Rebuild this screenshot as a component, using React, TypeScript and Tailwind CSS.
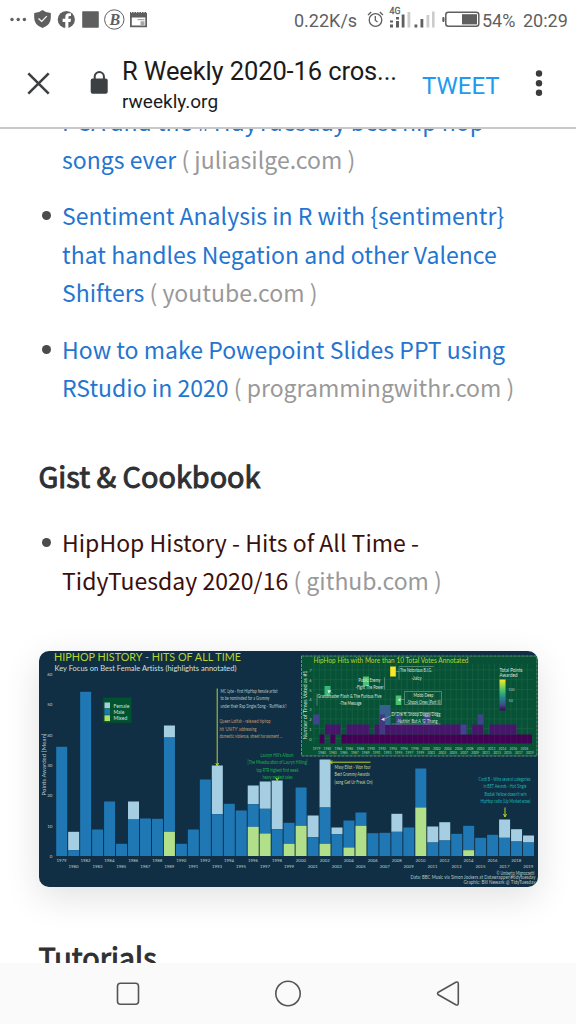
import type { ReactNode } from "react";

const SANS = "font-['Noto_Sans_CJK_SC','Noto_Sans',sans-serif]";

// [year, top of female, top of male, top of mixed]; a value equal to the next one means no segment
const BASE = 856.5;
const BARS: [number, number, number, number][] = [
  [1979, 747.3, 747.3, BASE], [1980, 832.3, 850.7, BASE], [1982, 692.3, 692.3, BASE], [1983, 830, 830, BASE],
  [1984, 802, 802, BASE], [1985, 844.3, 844.3, BASE], [1986, 802, 820, BASE], [1987, 819, 819, BASE],
  [1988, 819.3, 819.3, BASE], [1989, 726, 738, 832.3], [1990, 844.3, 844.3, BASE], [1991, 830, 830, BASE],
  [1992, 780, 780, BASE], [1993, 766, 814.7, BASE], [1994, 804.3, 804.3, BASE], [1995, 811, 811, BASE],
  [1996, 786, 804.7, 827.3], [1997, 782, 809.3, 834], [1998, 781, 829.7, BASE], [1999, 823.3, 823.3, 844.3],
  [2000, 788, 788, 826.3], [2001, 816, 837.7, BASE], [2002, 760, 808, 844.3], [2003, 828, 834.7, BASE],
  [2004, 821, 821, 848], [2005, 813, 813, 826.3], [2006, 833.7, 833.7, BASE], [2007, 833.3, 833.3, BASE],
  [2008, 814.3, 832.3, BASE], [2009, 828, 828, BASE], [2010, 769, 769, 808], [2011, 827, 843, BASE],
  [2012, 822.7, 841, BASE], [2013, 834.3, 834.3, BASE], [2014, 826.3, 826.3, 850.7], [2015, 838.3, 838.3, BASE],
  [2016, 835.3, 835.3, BASE], [2017, 820, 838.3, BASE], [2018, 829.7, 842, BASE], [2019, 836, 843, BASE],
];

function Label({ x, y, w, s, fill = "#b9c9c4", children }: { x: number; y: number; w: number; s: number; fill?: string; children: string }) {
  return (
    <text x={x} y={y} fontSize={s} fill={fill} textLength={w} lengthAdjust="spacingAndGlyphs">
      {children}
    </text>
  );
}

function Chart() {
  return (
    <svg viewBox="38.5 651.5 499 236" className="block h-[236px] w-[499px] rounded-[10px] font-['Lato','Open_Sans',sans-serif] shadow-[0_10px_36px_rgba(0,0,0,0.12)]" preserveAspectRatio="none">
      <defs>
        <linearGradient id="scale" x1="0" y1="0" x2="0" y2="1">
          <stop offset="0" stopColor="#fde725" />
          <stop offset="0.3" stopColor="#5ec962" />
          <stop offset="0.55" stopColor="#21918c" />
          <stop offset="0.8" stopColor="#3b528b" />
          <stop offset="1" stopColor="#440154" />
        </linearGradient>
      </defs>
      <rect x="38" y="651" width="500" height="238" fill="#102e44" />
      <Label x={53.5} y={661} w={187} s={11.5} fill="#b9d629">HIPHOP HISTORY - HITS OF ALL TIME</Label>
      <Label x={54} y={671.3} w={182} s={8} fill="#d5e0df">Key Focus on Best Female Artists (highlights annotated)</Label>
      <text transform="translate(45.5 796) rotate(-90)" fontSize="6" fill="#b9c9c4" textLength="62">Points Awarded [Mean]</text>
      {[0, 10, 20, 30, 40, 50, 60].map((v) => (
        <text key={v} x="52" y={858.5 - v * 3.035} fontSize="4.5" fill="#c2d0cf" textAnchor="end">{v}</text>
      ))}
      {BARS.map(([year, f, m, g], i) => {
        const x = 55.7 + i * 11.97;
        return (
          <g key={year}>
            {f < m && <rect x={x} y={f} width="11" height={m - f} fill="#a6cee3" />}
            <rect x={x} y={m} width="11" height={g - m} fill="#1f78b4" />
            {g < BASE && <rect x={x} y={g} width="11" height={BASE - g} fill="#b2df8a" />}
            <text x={x + 5.3} y={i % 2 ? 868.5 : 862.7} fontSize="4.3" fill="#c2d0cf" textAnchor="middle">{year}</text>
          </g>
        );
      })}

      <rect x="102.5" y="698" width="28.5" height="25.5" fill="#00532f" stroke="#123a31" />
      {[["Female", "#a6cee3"], ["Male", "#1f78b4"], ["Mixed", "#b2df6a"]].map(([t, c], i) => (
        <g key={t}>
          <rect x="104" y={703 + i * 6.4} width="5.5" height="5.8" fill={c} />
          <text x="113" y={708 + i * 6.4} fontSize="5" fill="#d5e0df">{t}</text>
        </g>
      ))}

      <path d="M216.7 689V766M215.3 763.5L216.7 766.5L218.1 763.5" stroke="#b9d629" fill="none" />
      <Label x={220} y={693} w={57} s={5}>MC Lyte - first HipHop female artist</Label>
      <Label x={220} y={700.5} w={49} s={5}>to be nominated for a Grammy</Label>
      <Label x={220} y={708} w={66} s={5}>under their Rap Single/Song - 'RuffNeck'!</Label>
      <Label x={219} y={723.5} w={51} s={5} fill="#c69f6c">Queen Latifah - released hiphop</Label>
      <Label x={219} y={731} w={37} s={5} fill="#c69f6c">hit 'UNITY' addressing</Label>
      <Label x={219} y={738.5} w={63} s={5} fill="#c69f6c">domestic violence, street harassment ...</Label>
      <Label x={260} y={757} w={33} s={5} fill="#16b94c">Lauryn Hill's Album</Label>
      <Label x={247} y={764.5} w={60} s={5} fill="#16b94c">[The Miseducation of Lauryn Hilling]</Label>
      <Label x={256} y={772} w={42} s={5} fill="#16b94c">top RTR highest first week</Label>
      <Label x={262} y={779.5} w={30} s={5} fill="#16b94c">heavy modest sales</Label>
      <path d="M275.3 778L276.7 781L278.1 778M329.5 762.7H370M332 761.2L329 762.7L332 764.2" stroke="#b9d629" fill="none" />
      <Label x={334} y={769} w={36} s={5} fill="#c8d99e">Missy Elliot - Won four</Label>
      <Label x={334} y={776.5} w={35} s={5} fill="#c8d99e">Best Grammy Awards</Label>
      <Label x={334} y={784} w={38} s={5} fill="#c8d99e">(song Get Ur Freak On)</Label>
      <Label x={478} y={781} w={52} s={5} fill="#18b8b5">Cardi B - Wins several categories</Label>
      <Label x={483} y={788.5} w={43} s={5} fill="#18b8b5">in BET Awards - Hot Single</Label>
      <Label x={484} y={796} w={42} s={5} fill="#18b8b5">Bodak Yellow doesn't win</Label>
      <Label x={480} y={803.5} w={50} s={5} fill="#18b8b5">HipHop radio (Up Market wow)</Label>
      <path d="M504.5 808V817M503 814.5L504.5 817.5L506 814.5" stroke="#b9d629" fill="none" />
      <Label x={496} y={875} w={38} s={5}>© Umberto Mignozzetti</Label>
      <Label x={410} y={879.7} w={125} s={5.2}>Data: BBC Music via Simon Jockers at Datawrapper|#tidytuesday</Label>
      <Label x={463} y={884.7} w={72} s={5.2}>Graphic: Bill Newark @ TidyTuesday</Label>

      <rect x="301" y="656.5" width="235.5" height="100" fill="#075236" stroke="#72977f" strokeWidth="0.9" strokeDasharray="3 1" />
      <path d={Array.from({ length: 40 }, (_, i) => `M${313.5 + i * 5.47} 664V744`).join("")} stroke="#23694a" strokeWidth="0.5" />
      <path d={Array.from({ length: 8 }, (_, i) => `M312 ${739 - i * 9.8}H533`).join("")} stroke="#23694a" strokeWidth="0.5" />
      <Label x={313} y={663} w={155} s={6.8} fill="#b9d629">HipHop Hits with More than 10 Total Votes Annotated</Label>
      <text transform="translate(306.5 740) rotate(-90)" fontSize="5.5" fill="#d5e0df" textLength="69">Number of Times Voted as #1</text>
      {[0, 1, 2, 3, 4, 5, 6, 7].map((v) => (
        <text key={v} x="311" y={741 - v * 9.8} fontSize="4" fill="#b9c9c4" textAnchor="end">{v}</text>
      ))}
      <path d="M318.8 735H324V744H318.8zM329.7 735H335V744H329.7zM340.8 735H531.5V744H340.8z" fill="#440154" />
      <path d="M324.5 725H340V735H324.5zM346 725H369V735H346zM374 725H466V735H374zM471.5 725H483V735H471.5zM489 725H516V735H489z" fill="#47166a" />
      <path d="M312.5 715H319V725H312.5zM477 715H483V725H477zM395.5 716H401V725H395.5zM423 715H430V725H423zM460 725H466V735H460z" fill="#40448b" />
      <rect x="379" y="705.5" width="11" height="20" fill="#34618d" />
      <rect x="379" y="715" width="5.5" height="20" fill="#453781" />
      <rect x="324" y="686.5" width="6" height="9.5" fill="#35b779" />
      <rect x="362.5" y="677" width="6" height="9.5" fill="#4ac16d" />
      <rect x="389.7" y="667" width="5.6" height="10" fill="#fde725" />
      <rect x="395.2" y="696" width="5.6" height="9.5" fill="#4ac16d" />
      <path d={Array.from({ length: 39 }, (_, i) => `M${318.9 + i * 5.47} 725V744`).join("")} stroke="#78539a" strokeOpacity="0.3" strokeWidth="0.5" />
      <g fill="none" stroke="#9bb9a7" strokeWidth="0.5">
        <path d="M316.5 694V706M384 678V690M398.5 668V680M398.5 667H433M395 672H399M404 692H441V705H404zM400 700H404M391 713H438M391 724.5H440" />
        <path d="M383 720L391 716M328 691L332 694" />
      </g>
      <path d="M380.5 720L384 718V721.5zM327 690.5L331 691L328 694zM397 700.5L400 698.5V702z" fill="#d7e5df" />
      <Label x={399.5} y={672} w={32} s={4.8} fill="#dce6dd">The Notorious B.I.G.</Label>
      <Label x={411} y={680} w={10} s={4.8} fill="#dce6dd">-Juicy</Label>
      <Label x={358} y={682} w={22} s={4.8} fill="#dce6dd">Public Enemy</Label>
      <Label x={355} y={689.5} w={28} s={4.8} fill="#dce6dd">-Fight The Power</Label>
      <Label x={317} y={698} w={64} s={4.8} fill="#dce6dd">Grandmaster Flash &amp; The Furious Five</Label>
      <Label x={339} y={705.5} w={22} s={4.8} fill="#dce6dd">-The Message</Label>
      <Label x={413} y={697} w={20} s={4.8} fill="#dce6dd">Mobb Deep</Label>
      <Label x={406} y={704.5} w={34} s={4.8} fill="#dce6dd">-Shook Ones (Part II)</Label>
      <Label x={391} y={716.5} w={49} s={4.8} fill="#dce6dd">Dr Dre ft. Snoop Doggy Dogg</Label>
      <Label x={396} y={723.8} w={41} s={4.8} fill="#dce6dd">-Nuthin' But A 'G' Thang</Label>
      <Label x={499} y={672} w={23} s={4.8} fill="#dce6dd">Total Points</Label>
      <Label x={499} y={677} w={18} s={4.8} fill="#dce6dd">Awarded</Label>
      <rect x="499" y="680" width="6" height="31" fill="url(#scale)" />
      <Label x={508} y={691} w={6} s={4}>100</Label>
      <Label x={508} y={702.5} w={4.5} s={4}>50</Label>
      {BARS.map(([year], i) => (
        <text key={year} x={316 + i * 5.47} y={i % 2 ? 754.2 : 750} fontSize="3.3" fill="#b9c9c4" textAnchor="middle">{year}</text>
      ))}
    </svg>
  );
}

function Line({ children }: { children: ReactNode }) {
  return <div className="h-[38.4px] whitespace-nowrap">{children}</div>;
}

function Item({ children }: { children: ReactNode }) {
  return (
    <li className="flex">
      <span className="mt-[15px] mr-[11.5px] ml-[3px] size-[9px] shrink-0 rounded-full bg-[#4b4b4d]" />
      <div>{children}</div>
    </li>
  );
}

const Src = ({ children }: { children: string }) => <span className="text-[#999]">{children}</span>;

function Heading({ children, className }: { children: ReactNode; className: string }) {
  return (
    <h2 className={`h-[38px] text-[28.8px] leading-[38px] font-normal whitespace-nowrap text-[#2f3033] [-webkit-text-stroke:1px_#2f3033] ${className}`}>
      {children}
    </h2>
  );
}

function StatusBar() {
  return (
    <div className="flex h-10 shrink-0 items-center text-[#5f5f5f]">
      <svg className="h-10 w-[288px]" viewBox="0 0 288 40" fill="#5f5f5f">
        <circle cx="12" cy="19.5" r="1.7" /><circle cx="18.2" cy="19.5" r="1.7" /><circle cx="24.4" cy="19.5" r="1.7" />
        <path d="M42.5 10Q46 13 50.8 13V18Q50.8 25 42.5 28Q34.2 25 34.2 18V13Q39 13 42.5 10z" />
        <path d="M38.5 18.5L41.7 21.5L46.8 16.2" fill="none" stroke="#fff" strokeWidth="1.2" />
        <circle cx="66.3" cy="19.5" r="8.6" />
        <path d="M65.3 28.3V22H62.6V18.8H65.3V16.8Q65.3 13.3 68.8 13.3H71V16.1H69.7Q68.4 16.1 68.4 17.4V18.8H71L70.5 22H68.4V28.3z" fill="#fff" />
        <rect x="82.2" y="11.3" width="16.6" height="16.5" rx="0.7" />
        <circle cx="114.3" cy="19.5" r="9.7" fill="none" stroke="#5f5f5f" strokeWidth="1" />
        <text x="109.5" y="25" fontSize="16" fontStyle="italic" fontWeight="700" className="font-['Liberation_Serif',serif]">B</text>
        <path d="M130 12H147V27.2H130z M131.8 17.5V25.6H145.3V17.5z" fillRule="evenodd" />
        <path d="M137.5 19H144.5V20.2H137.5zM140.5 21.2H144.5V25H140.5z" opacity=".55" />
        <path d="M131 12.3H147" stroke="#fff" strokeWidth="1" strokeDasharray="1 1.5" />
      </svg>
      <span className="ml-[6px] w-[63px] text-[18px] whitespace-nowrap">0.22K/s</span>
      <svg className="ml-[9px] h-10 w-[116px]" viewBox="366 0 116 40">
        <g fill="none" stroke="#5f5f5f" strokeWidth="1.3">
          <circle cx="375.5" cy="20" r="6.3" />
          <path d="M375.3 16V20.3L377.5 22M368 15L371.2 12M379.8 12L383 15" />
        </g>
        <text x="389.5" y="14.3" fontSize="8.8" fill="#5f5f5f" stroke="#5f5f5f" strokeWidth="0.3" textLength="11">4G</text>
        <path d="M390 24.5H393V27.5H390zM390 20.5H393V22.5H390zM396 21H399V27.5H396zM396 17H399V19.5H396zM401.7 14.5H404.5V27.5H401.7zM414.5 24.5H417.3V27.5H414.5zM420.5 19H423.3V27.5H420.5z" fill="#5f5f5f" />
        <path d="M407.5 12H410.3V27.5H407.5zM426.5 15H429.3V27.5H426.5zM432 11.5H434.6V27.5H432z" fill="#ccc" />
        <rect x="445.8" y="12.3" width="33" height="14" rx="2.5" fill="none" stroke="#5f5f5f" strokeWidth="1.5" />
        <rect x="462" y="14.2" width="15" height="10.2" fill="#5f5f5f" />
        <rect x="442.3" y="17" width="2.2" height="5" rx="1" fill="#5f5f5f" />
      </svg>
      <span className="w-[41px] text-[18px] whitespace-nowrap">54%</span>
      <span className="text-[18px] whitespace-nowrap">20:29</span>
    </div>
  );
}

export default function App() {
  return (
    <div className="flex h-[1024px] w-[576px] flex-col overflow-hidden bg-white font-['Roboto',sans-serif]">
      <StatusBar />
      <header className="flex h-[89px] shrink-0 border-b-2 border-[#c9c9c9] bg-white">
        <svg className="h-[87px] w-[122px] shrink-0" viewBox="0 40 122 87">
          <path d="M28.3 73.3L48.7 93.7M48.7 73.3L28.3 93.7" stroke="#3c4043" strokeWidth="2.6" />
          <rect x="90.7" y="78.5" width="17" height="15.3" rx="2" fill="#3c4043" />
          <path d="M94.7 79V76.6A4.6 4.6 0 0 1 103.9 76.6V79" fill="none" stroke="#3c4043" strokeWidth="2" />
        </svg>
        <div className="w-[300px] pt-[15px] text-[#1b1b1b]">
          <div className="h-[33px] text-[25.5px] leading-[33px] tracking-[-0.12px] whitespace-nowrap">R Weekly 2020-16 cros...</div>
          <div className="mt-px h-[26px] text-[19px] leading-[26px] whitespace-nowrap">rweekly.org</div>
        </div>
        <span className="w-[104px] pt-[29px] text-[24px] leading-[34px] text-[#1d9bf0]">TWEET</span>
        <svg className="h-[87px] w-[24px]" viewBox="526 40 24 87" fill="#3b3b3d">
          <circle cx="539" cy="73.5" r="3.2" /><circle cx="539" cy="83.2" r="3.2" /><circle cx="539" cy="92.8" r="3.2" />
        </svg>
      </header>
      <main className={`min-h-0 flex-1 overflow-hidden pl-[38.5px] text-[23px] leading-[38.4px] tracking-[0.02px] text-[#2475d0] ${SANS}`}>
        <ul className="-mt-[27.2px] flex flex-col gap-[17.9px]">
          <Item>
            <Line>PCA and the #TidyTuesday best hip hop</Line>
            <Line>songs ever <Src>( juliasilge.com )</Src></Line>
          </Item>
          <Item>
            <Line>Sentiment Analysis in R with {"{sentimentr}"}</Line>
            <Line>that handles Negation and other Valence</Line>
            <Line>Shifters <Src>( youtube.com )</Src></Line>
          </Item>
          <Item>
            <Line>How to make Powepoint Slides PPT using</Line>
            <Line>RStudio in 2020 <Src>( programmingwithr.com )</Src></Line>
          </Item>
        </ul>
        <Heading className="mt-[50.4px]">Gist &amp; Cookbook</Heading>
        <ul className="mt-[28px] text-[#3c0f0c]">
          <Item>
            <Line>HipHop History - Hits of All Time -</Line>
            <Line>TidyTuesday 2020/16 <Src>( github.com )</Src></Line>
          </Item>
        </ul>
        <div className="mt-[51.4px]"><Chart /></div>
        <Heading className="mt-[51px]">Tutorials</Heading>
      </main>
      <nav className="z-10 h-[61px] shrink-0 bg-[#fafafa]">
        <svg className="h-[61px] w-[576px]" viewBox="0 963 576 61" fill="none" stroke="#555" strokeWidth="1.6">
          <rect x="117.5" y="983.3" width="21" height="21" rx="3" />
          <circle cx="288" cy="993.5" r="12.2" />
          <path d="M438.3 992.2L455.8 982.2Q458.3 981.3 458.3 984V1003Q458.3 1005.8 455.8 1004.7L438.3 994.8Q436.8 993.5 438.3 992.2z" />
        </svg>
      </nav>
    </div>
  );
}
